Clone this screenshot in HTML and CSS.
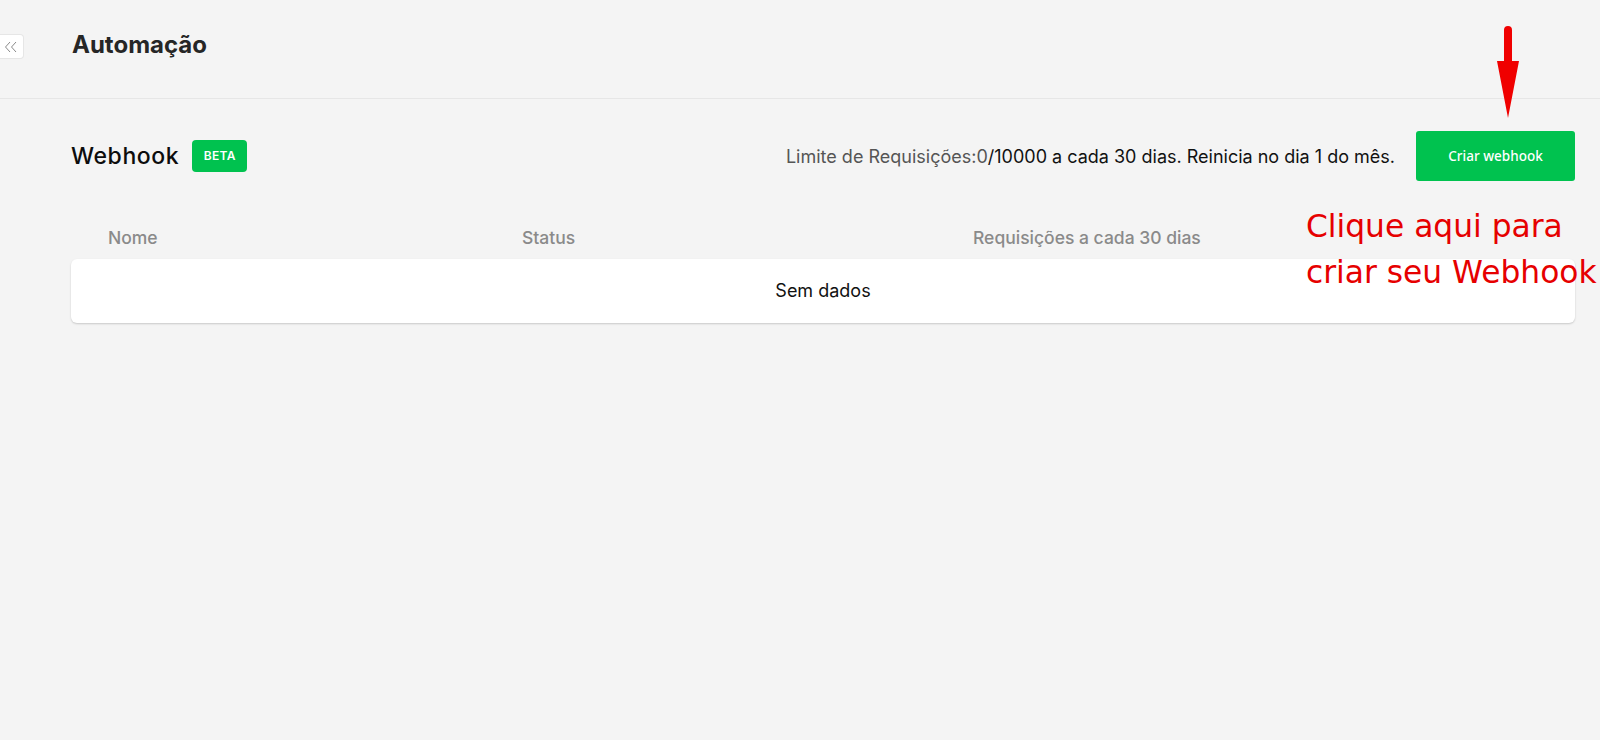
FILE: index.html
```html
<!DOCTYPE html>
<html lang="pt-BR">
<head>
    <meta charset="UTF-8">
    <meta name="viewport" content="width=device-width, initial-scale=1.0">
    <title>Automação - Webhook</title>
    <link rel="stylesheet" href="styles.css">
</head>
<body>
    <div class="page">
        <header class="page-header">
            <button class="collapse-toggle" aria-label="Recolher menu">
                <svg width="14" height="12" viewBox="0 0 14 12">
                    <path d="M6 1 L1.5 6 L6 11 M12 1 L7.5 6 L12 11" fill="none" stroke="#8a8a8a" stroke-width="1"/>
                </svg>
            </button>
            <h1 class="page-title">Automação</h1>
        </header>

        <main class="content">
            <div class="section-bar">
                <div class="section-title">
                    <h2>Webhook</h2>
                    <span class="badge">BETA</span>
                </div>
                <div class="section-actions">
                    <div class="limit-text">
                        <span class="muted">Limite de Requisições:0</span>/10000 a cada 30 dias. Reinicia no dia 1 do mês.
                    </div>
                    <button class="primary-button">Criar webhook</button>
                </div>
            </div>

            <div class="table">
                <div class="table-head">
                    <div>Nome</div>
                    <div>Status</div>
                    <div>Requisições a cada 30 dias</div>
                </div>
                <div class="table-body">
                    <div class="empty">Sem dados</div>
                </div>
            </div>
        </main>

        <!-- tutorial annotation -->
        <svg class="hint-arrow" width="24" height="94" viewBox="0 0 24 94">
            <path d="M8 5 Q8 1 12 1 Q16 1 16 5 L16 36 L23 36 L12 93 L1 36 L8 36 Z" fill="#f00000"/>
        </svg>
        <div class="hint-text">
            Clique aqui para<br />
            criar seu Webhook
        </div>
    </div>
</body>
</html>
```

FILE: styles.css
```css
html, body {
    margin: 0;
    padding: 0;
}

body {
    background-color: #f4f4f4;
    font-family: Inter, "Noto Sans", sans-serif;
    color: #111;
    overflow: hidden;
}

.page {
    position: relative;
    width: 1600px;
    height: 740px;
    overflow: hidden;
}

.page-header {
    display: flex;
    align-items: flex-start;
    gap: 48px;
    height: 99px;
    box-sizing: border-box;
    padding-top: 30px;
    border-bottom: 1px solid #e6e6e6;
}

.collapse-toggle {
    width: 24px;
    height: 25px;
    margin-top: 4px;
    padding: 0 0 0 4px;
    background-color: #ffffff;
    border: 1px solid #e6e6e6;
    border-left: none;
    border-radius: 0 4px 4px 0;
    display: flex;
    align-items: center;
    justify-content: flex-start;
    cursor: pointer;
}

.page-title {
    margin: 0;
    font-size: 24px;
    line-height: 29px;
    font-weight: 700;
    color: #262626;
}

.content {
    padding: 32px 25px 0 71px;
}

.section-bar {
    display: flex;
    align-items: center;
    justify-content: space-between;
    height: 50px;
}

.section-title {
    display: flex;
    align-items: center;
    gap: 13px;
}

.section-title h2 {
    margin: 0;
    font-size: 23px;
    font-weight: 500;
    letter-spacing: 0.6px;
    color: #0d0d0d;
}

.badge {
    display: inline-block;
    width: 55px;
    height: 32px;
    line-height: 32px;
    text-align: center;
    background-color: #00c24f;
    color: #ffffff;
    border-radius: 4px;
    font-size: 12px;
    font-weight: 600;
    letter-spacing: 0.3px;
}

.section-actions {
    display: flex;
    align-items: center;
    gap: 21px;
}

.limit-text {
    font-size: 18px;
    color: #111;
}

.limit-text .muted {
    color: #555;
}

.primary-button {
    width: 159px;
    height: 50px;
    background-color: #00c24f;
    color: #ffffff;
    border: none;
    border-radius: 3px;
    font-family: "Noto Sans", sans-serif;
    font-size: 13.5px;
    font-weight: 500;
    cursor: pointer;
}

.table {
    margin-top: 45px;
}

.table-head {
    display: grid;
    grid-template-columns: 414px 451px auto;
    padding: 0 0 9px 37px;
    line-height: 24px;
    font-size: 17.5px;
    font-weight: 500;
    color: #8a8a8a;
}

.table-body {
    background-color: #ffffff;
    border-radius: 6px;
    box-shadow: 0 1px 2px rgba(0, 0, 0, 0.18);
}

.empty {
    height: 64px;
    line-height: 64px;
    text-align: center;
    font-size: 18px;
    color: #111;
}

.hint-arrow {
    position: absolute;
    left: 1496px;
    top: 25px;
}

.hint-text {
    position: absolute;
    left: 1306px;
    top: 203px;
    font-family: "DejaVu Sans", Verdana, sans-serif;
    font-size: 31.3px;
    line-height: 46px;
    color: #e60000;
    white-space: nowrap;
}
```
